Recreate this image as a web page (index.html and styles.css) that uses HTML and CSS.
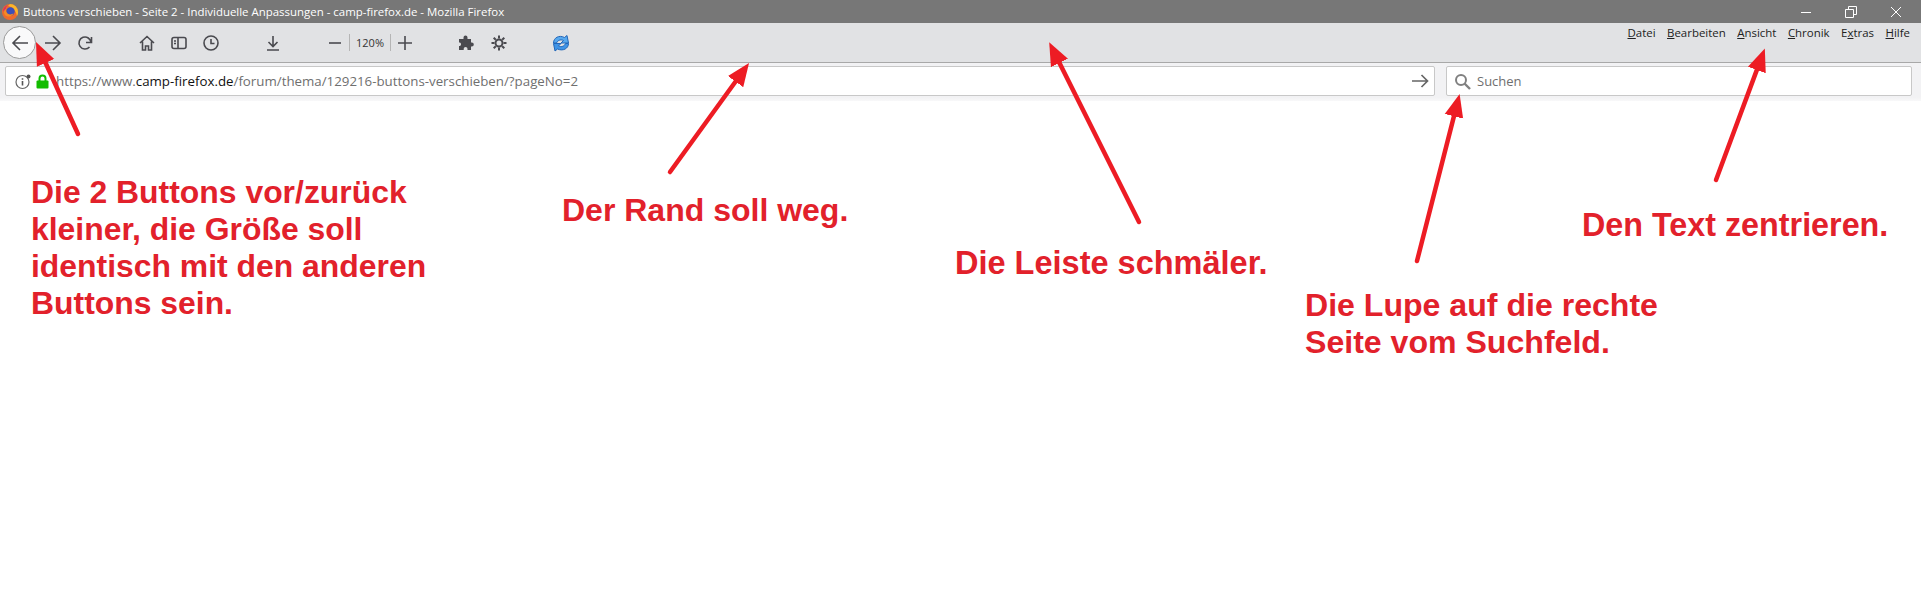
FILE: index.html
```html
<!DOCTYPE html>
<html lang="de">
<head>
  <meta charset="UTF-8" />
  <title>Buttons verschieben</title>
  <link rel="stylesheet" href="styles.css">
</head>
<body>

<div class="titlebar">
  <svg class="ff-logo" width="16" height="16" viewBox="0 0 16 16">
    <circle cx="8" cy="8" r="8" fill="#ee6a2c"/>
    <path d="M8 0a8 8 0 0 1 8 8c0 2-.5 3-1 4-1-5-4-9-9-10z" fill="#fbb62a"/>
    <circle cx="8.500" cy="7.500" r="4.200" fill="#3d4fb8"/>
    <path d="M4.500 4c-1 2-.5 4 1 5.500 2 1.500 4.500 1.200 6-.5-.5 2.500-3 4-5.500 3.500C3 12 1.500 9.500 2 6.500 2.500 5 3.500 4 4.500 3z" fill="#f48a24"/>
    <path d="M1 6C1.500 3.500 3.500 1.500 6 1 4.500 2.500 4 3.500 4 5 2.500 5.500 2 7 2 8z" fill="#d9395c"/>
  </svg>
  <span class="title-text">Buttons verschieben - Seite 2 - Individuelle Anpassungen - camp-firefox.de - Mozilla Firefox</span>
  <div class="window-btns">
    <svg width="12" height="12" viewBox="0 0 12 12"><path d="M1 6.500h10" stroke="#fff"/></svg>
    <svg width="12" height="12" viewBox="0 0 12 12"><path d="M.5 3.500h8v8h-8zM3.500 3V.5h8v8H9" fill="none" stroke="#fff"/></svg>
    <svg width="12" height="12" viewBox="0 0 12 12"><path d="M1 1l10 10M11 1L1 11" stroke="#fff"/></svg>
  </div>
</div>

<div class="toolbar">
  <div class="tools">
    <button class="back">
      <svg width="18" height="18" viewBox="0 0 18 18"><path d="M17 9H2M9 2L2 9l7 7" class="ico"/></svg>
    </button>
    <button class="tool"><svg width="18" height="18" viewBox="0 0 18 18"><path d="M1 9h15M9 2l7 7-7 7" class="ico"/></svg></button>
    <button class="tool"><svg width="16" height="16" viewBox="0 0 16 16"><path d="M14 7.500A6 6 0 1 0 12.500 12M14.500 2v5.500H9" class="ico"/></svg></button>
    <span class="gap-home"></span>
    <button class="tool"><svg width="16" height="16" viewBox="0 0 16 16"><path d="M1 8l7-6.500L15 8M3.500 6.500V15h3v-4h3v4h3V6.500" class="ico"/></svg></button>
    <button class="tool"><svg width="16" height="16" viewBox="0 0 16 16"><rect x="1" y="2.500" width="14" height="11" rx="2" class="ico"/><path d="M7 3v10M3 6h2M3 8.500h2" class="ico"/></svg></button>
    <button class="tool"><svg width="16" height="16" viewBox="0 0 16 16"><circle cx="8" cy="8" r="7" class="ico"/><path d="M8 4v4.500h3.500" class="ico"/></svg></button>
    <span class="gap-home"></span>
    <button class="tool"><svg width="16" height="16" viewBox="0 0 16 16"><path d="M8 1v10M3.500 7L8 11.500 12.500 7M2 15h12" class="ico"/></svg></button>
    <span class="gap-zoom"></span>
    <div class="zoom-group">
      <button class="tool zoom-btn"><svg width="12" height="12" viewBox="0 0 12 12"><path d="M0 6h12" class="ico"/></svg></button>
      <span class="zoom-value">120%</span>
      <button class="tool zoom-btn"><svg width="14" height="14" viewBox="0 0 14 14"><path d="M0 7h14M7 0v14" class="ico"/></svg></button>
    </div>
    <span class="gap-zoom"></span>
    <button class="tool"><svg width="16" height="16" viewBox="0 0 16 16"><path d="M0 4h4.500V2.500a2 2 0 0 1 4 0V4H12v3.500h.8a2 2 0 0 1 0 4H12V15H8.500v-1.200a1.900 1.900 0 0 0-3.800 0V15H0v-4h1a2 2 0 0 0 0-3.500H0z" fill="#4a4a4f"/></svg></button>
    <button class="tool"><svg width="16" height="16" viewBox="0 0 16 16"><circle cx="8" cy="8" r="3.500" class="ico thick"/><path d="M8 .5v3M8 12.500v3M.5 8h3M12.500 8h3M2.700 2.700l2.100 2.100M11.200 11.200l2.100 2.100M13.300 2.700l-2.100 2.100M4.800 11.200l-2.100 2.100" class="ico thick"/></svg></button>
    <span class="gap-home"></span>
    <button class="tool"><svg width="18" height="18" viewBox="0 0 18 18"><path d="M1.500 9C1.500 4 7 .5 12.500 3.500L15 1.500l1.500 7.500H9l2.500-2.500C8.500 5 5.500 6.500 4.500 9z" fill="#58a9ee" stroke="#2266b8"/><path d="M16.500 9.500c0 5-5.500 8-11 5.500L3 17 1.500 9.500H9L6.500 12c3 1.500 6 0 7-2.500z" fill="#3f94e6" stroke="#2266b8"/></svg></button>
  </div>
  <nav class="menu">
    <span><u>D</u>atei</span>
    <span><u>B</u>earbeiten</span>
    <span><u>A</u>nsicht</span>
    <span><u>C</u>hronik</span>
    <span>E<u>x</u>tras</span>
    <span><u>H</u>ilfe</span>
  </nav>
</div>

<div class="navbar">
  <div class="urlbar">
    <svg class="info" width="17" height="17" viewBox="0 0 17 17"><circle cx="7.500" cy="9" r="6.500" fill="none" stroke="#666" stroke-width="1.200"/><path d="M7.500 8v4.500M7.500 5.300v1.500" stroke="#555" stroke-width="1.600"/><circle cx="13.500" cy="3.500" r="2" fill="#555"/></svg>
    <svg class="lock" width="13" height="15" viewBox="0 0 13 15"><path d="M3.500 7V4.500a3 3 0 0 1 6 0V7" fill="none" stroke="#12bc00" stroke-width="2"/><rect x="0.500" y="6.500" width="12" height="8" rx="1" fill="#12bc00"/></svg>
    <span class="url">https://www.<b>camp-firefox.de</b>/forum/thema/129216-buttons-verschieben/?pageNo=2</span>
    <svg class="go" width="17" height="14" viewBox="0 0 17 14"><path d="M0 7h15.500M9.500 1l6 6-6 6" fill="none" stroke="#666" stroke-width="1.700"/></svg>
  </div>
  <div class="searchbar">
    <svg width="17" height="17" viewBox="0 0 17 17"><circle cx="7" cy="7" r="5" fill="none" stroke="#808080" stroke-width="2"/><path d="M10.500 10.500l5.500 5.500" stroke="#808080" stroke-width="2.400"/></svg>
    <span class="search-text">Suchen</span>
  </div>
</div>

<!-- Anmerkungen auf dem Screenshot -->
<svg class="arrows" width="1921" height="613" viewBox="0 0 1921 613">
  <defs>
    <marker id="head" markerUnits="userSpaceOnUse" markerWidth="24" markerHeight="22" refX="10" refY="10" orient="auto">
      <path d="M0 0.500L23 10 0 19.500z" fill="#ed1c24"/>
    </marker>
  </defs>
  <path d="M78 134L41.400 53.800" class="arrow"/>
  <path d="M670 172L741.400 73.500" class="arrow"/>
  <path d="M1139 222L1055 54" class="arrow"/>
  <path d="M1417 261L1456.400 106.600" class="arrow"/>
  <path d="M1716 180L1760.300 60.600" class="arrow"/>
</svg>

<p class="note note-buttons">Die 2 Buttons vor/zurück<br>kleiner, die Größe soll<br>identisch mit den anderen<br>Buttons sein.</p>
<p class="note note-rand">Der Rand soll weg.</p>
<p class="note note-leiste">Die Leiste schmäler.</p>
<p class="note note-lupe">Die Lupe auf die rechte<br>Seite vom Suchfeld.</p>
<p class="note note-text">Den Text zentrieren.</p>

</body>
</html>
```
FILE: styles.css
```css
html, body {
  margin: 0;
  height: 613px;
  overflow: hidden;
  background: white;
}
body {
  font-family: "Open Sans", sans-serif;
  position: relative;
}
.titlebar {
  height: 23px;
  background: #777777;
  color: white;
  display: flex;
  align-items: center;
  padding-left: 2px;
  font-size: 11.450px;
}
.ff-logo {
  margin-right: 5px;
}
.window-btns {
  margin-left: auto;
  display: flex;
  gap: 33px;
  padding-right: 19px;
}
.toolbar {
  height: 39px;
  background: #e1e2e4;
  border-bottom: 1px solid #a8a8a8;
  display: flex;
  justify-content: space-between;
}
.tools {
  display: flex;
  align-items: center;
  padding-left: 3px;
}
button {
  border: none;
  background: none;
  padding: 0;
  display: flex;
  align-items: center;
  justify-content: center;
}
.back {
  width: 33px;
  height: 33px;
  margin-right: 1px;
  border-radius: 50%;
  background: #f9f9fa;
  border: 1px solid #9a9a9a;
  box-sizing: border-box;
}
.tool {
  width: 32px;
  height: 32px;
}
.ico {
  fill: none;
  stroke: #4a4a4f;
  stroke-width: 1.600;
}
.thick {
  stroke-width: 2;
}
.gap-home {
  width: 30px;
}
.gap-zoom {
  width: 32px;
}
.zoom-group {
  display: flex;
  align-items: center;
}
.zoom-btn {
  width: 28px;
}
.zoom-value {
  width: 42px;
  box-sizing: border-box;
  text-align: center;
  font-size: 11px;
  color: #333;
  border-left: 1px solid #b5b5b5;
  border-right: 1px solid #b5b5b5;
  height: 17px;
  line-height: 17px;
}
.menu {
  display: flex;
  gap: 11.500px;
  padding: 2px 11px 0 0;
  font-size: 11.450px;
  color: #222;
}
.navbar {
  height: 38px;
  box-sizing: border-box;
  background: linear-gradient(#f2f2f4, #f2f2f4 90%, #f8f8f9);
  display: flex;
  gap: 11px;
  padding: 3px 9px 6px 5px;
}
.urlbar, .searchbar {
  background: white;
  border: 1px solid #c8c8c8;
  border-radius: 2px;
  display: flex;
  align-items: center;
  box-sizing: border-box;
  height: 30px;
}
.urlbar {
  width: 1430px;
  padding: 0 5px 0 9px;
}
.searchbar {
  flex: 1;
  padding-left: 7px;
}
.info {
  margin-right: 4px;
}
.url {
  margin-left: 7px;
  font-size: 13.300px;
  color: #6f6f6f;
}
.url b {
  font-weight: normal;
  color: #111;
}
.go {
  margin-left: auto;
}
.search-text {
  margin-left: 6px;
  font-size: 13px;
  color: #6f6f6f;
}
.arrows {
  position: absolute;
  left: 0;
  top: 0;
  pointer-events: none;
}
.arrow {
  stroke: #ed1c24;
  stroke-width: 4.500;
  stroke-linecap: round;
  fill: none;
  marker-end: url(#head);
}
.note {
  position: absolute;
  margin: 0;
  font-family: "Liberation Sans", Arial, sans-serif;
  font-weight: bold;
  font-size: 32px;
  line-height: 37px;
  color: #e2212b;
  white-space: nowrap;
}
.note-buttons { left: 31px; top: 174px; font-size: 31.900px; }
.note-rand { left: 562px; top: 192px; }
.note-leiste { left: 955px; top: 245px; font-size: 32.500px; }
.note-lupe { left: 1305px; top: 287px; font-size: 32.100px; }
.note-text { left: 1582px; top: 207px; font-size: 32.300px; }
```
